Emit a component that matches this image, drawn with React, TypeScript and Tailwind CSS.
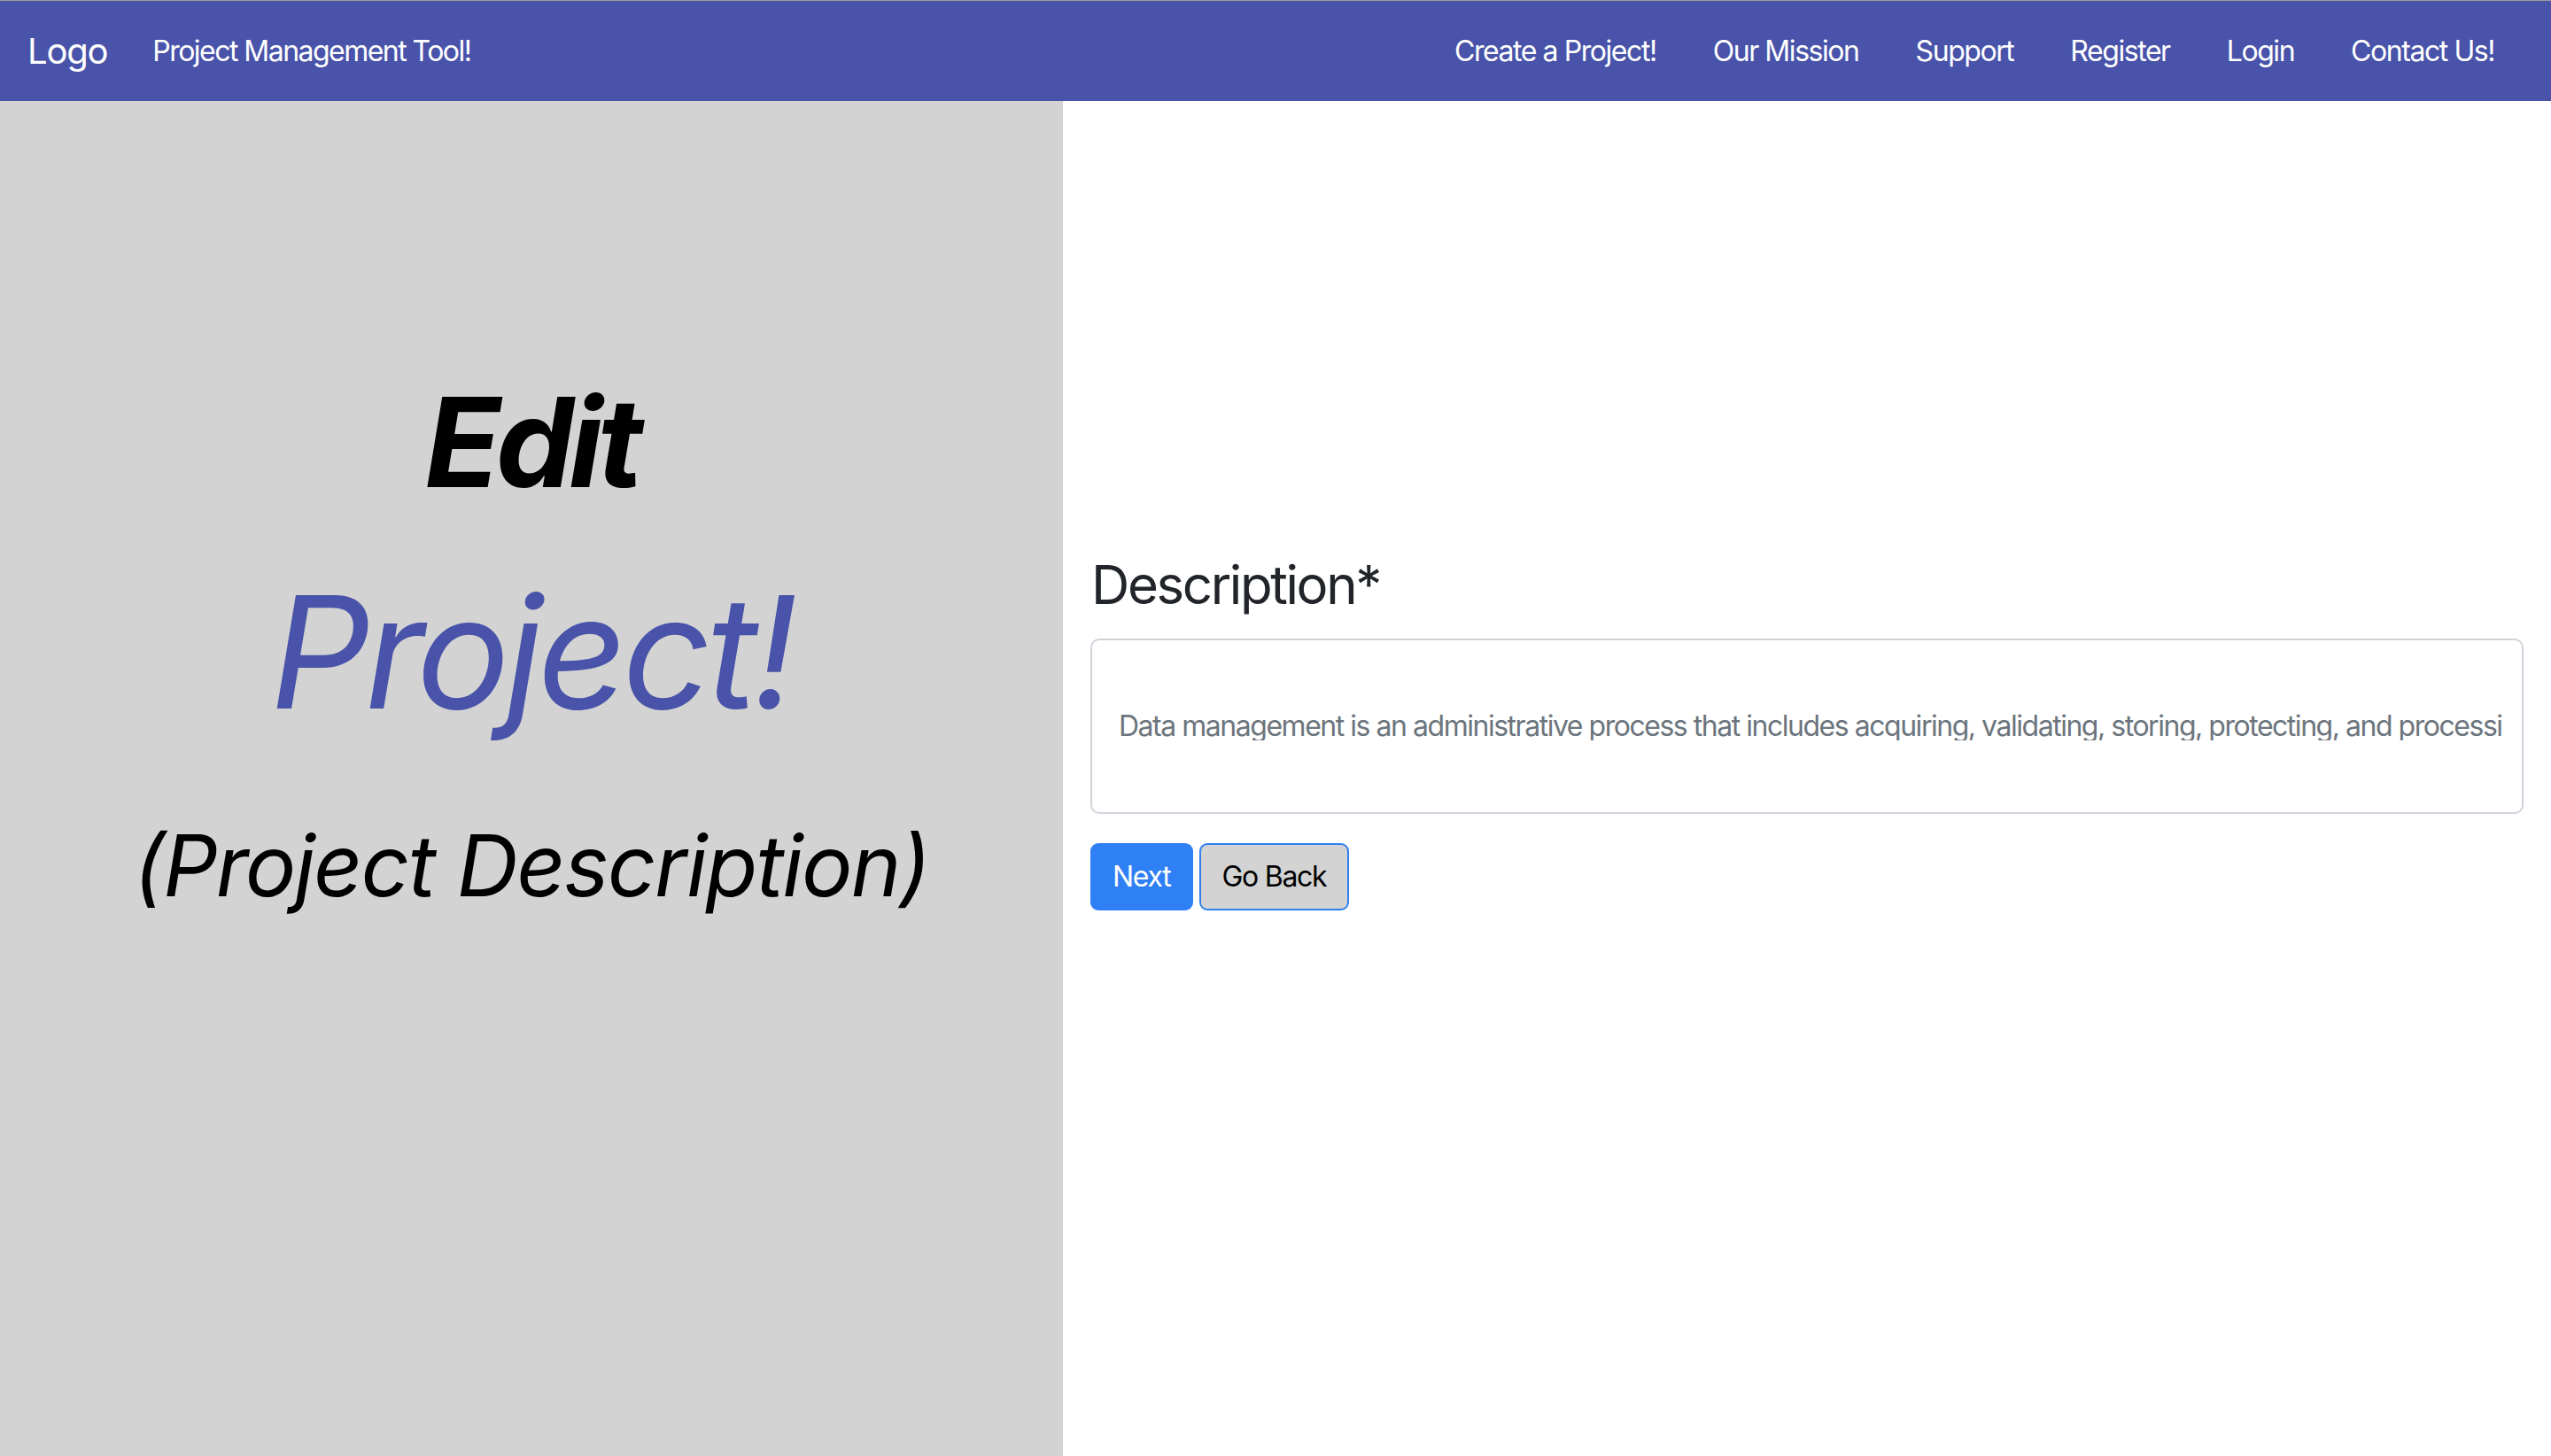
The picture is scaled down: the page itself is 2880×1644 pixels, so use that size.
import React from "react";

const font = { fontFamily: "Inter, 'Noto Sans', sans-serif" };

export default function App() {
  const links = ["Create a Project!", "Our Mission", "Support", "Register", "Login", "Contact Us!"];
  return (
    <div className="w-[2880px] h-[1644px] flex flex-col overflow-hidden bg-white" style={font}>
      <div className="h-[1px] bg-[#9a9a9a] shrink-0" />
      <nav className="h-[113px] shrink-0 bg-[#4853a9] flex items-center justify-between text-white">
        <div className="flex items-center pl-[31px]">
          <span className="text-[40px] leading-none tracking-[-0.03em]">Logo</span>
          <span className="ml-[51px] text-[32px] leading-none tracking-[-0.048em] whitespace-nowrap">Project Management Tool!</span>
        </div>
        <div className="flex items-center gap-[64px] pr-[64px]">
          {links.map((l) => (
            <span key={l} className="text-[32px] leading-none tracking-[-0.045em] whitespace-nowrap">{l}</span>
          ))}
        </div>
      </nav>
      <div className="flex flex-1 min-h-0">
        <div className="w-[1200px] shrink-0 bg-[#d3d3d3] flex flex-col items-center pt-[315px]">
          <div className="text-[140px] leading-none font-bold italic text-black tracking-[-0.04em] whitespace-nowrap">Edit</div>
          <div className="mt-[79px] text-[176px] leading-none italic text-[#4853a9] tracking-[-0.032em] whitespace-nowrap">Project!</div>
          <div className="mt-[105px] text-[96px] leading-none italic text-black tracking-[-0.018em] whitespace-nowrap">(Project Description)</div>
        </div>
        <div className="flex-1 min-w-0 flex flex-col pl-[31px] pr-[31px] pt-[516px]">
          <div className="text-[60px] leading-none text-[#212529] pl-[1px] tracking-[-0.04em] whitespace-nowrap">Description*</div>
          <div className="mt-[31px] h-[198px] border-2 border-[#ced4da] rounded-[10px] bg-white flex items-center pl-[30px] pr-[22px] min-w-0">
            <div className="min-w-0 flex-1 overflow-hidden whitespace-nowrap text-[32px] leading-none text-[#6c757d] tracking-[-0.046em]">
              Data management is an administrative process that includes acquiring, validating, storing, protecting, and processing required data to ensure the accessibility, reliability, and timeliness of the data for its users.
            </div>
          </div>
          <div className="mt-[33px] flex gap-[7px]">
            <button className="h-[76px] px-[25px] rounded-[9px] bg-[#2f7ff5] text-white text-[32px] leading-none tracking-[-0.04em]" style={font}>Next</button>
            <button className="h-[76px] px-[24px] rounded-[9px] bg-[#d3d3d3] border-2 border-[#3080f0] text-black text-[32px] leading-none tracking-[-0.04em]" style={font}>Go Back</button>
          </div>
        </div>
      </div>
    </div>
  );
}
